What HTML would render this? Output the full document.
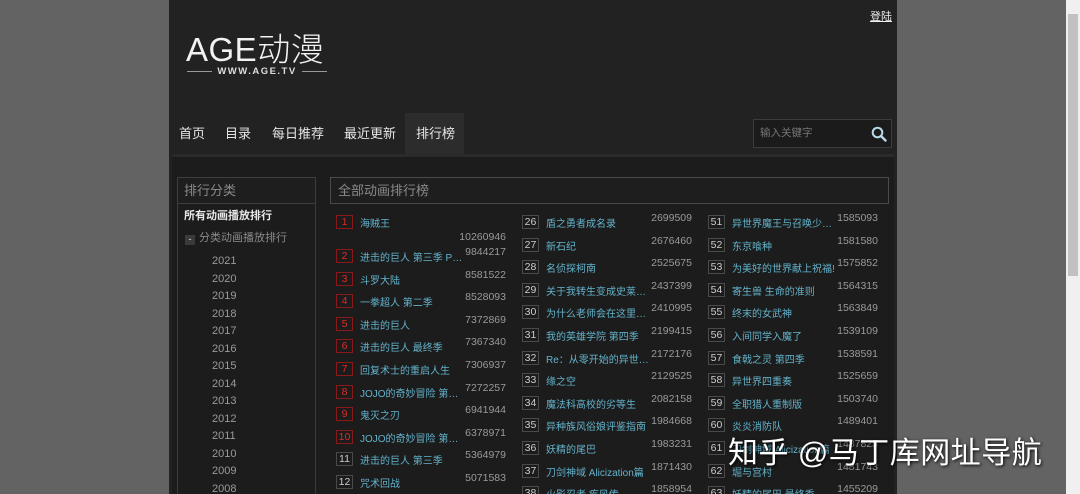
<!DOCTYPE html>
<html><head><meta charset="utf-8"><style>
*{margin:0;padding:0;box-sizing:border-box}
html,body{width:1080px;height:494px;overflow:hidden}
body{background:#636363;font-family:"Liberation Sans","Noto Sans CJK SC",sans-serif;position:relative}
.abs{position:absolute}
#main{left:169px;top:0;width:728px;height:494px;background:#222}
#sb{left:1066px;top:0;width:14px;height:494px;background:#f0f0f0}
#thumb{left:1068px;top:14px;width:10px;height:262px;background:#c1c1c1}
.logo{left:186px;top:23px;color:#f2f2f2;font-size:33px;letter-spacing:0.5px;font-weight:300}
.www{left:187px;top:66px;color:#ddd;font-size:9.5px;letter-spacing:1.5px;font-weight:bold;width:140px;display:flex;align-items:center;gap:5px}
.www i{flex:1;height:1px;background:#999}
.login{left:870px;top:8px;color:#eee;font-size:11px;text-decoration:underline}
.nav{top:113px;height:41px;line-height:41px;color:#e6e6e6;font-size:13px}
.act{left:405px;top:113px;width:59px;height:41px;background:#2c2c2c}
.search{left:753px;top:119px;width:139px;height:29px;border:1px solid #3c3c3c;background:#1b1b1b;color:#777;font-size:10.5px;line-height:27px;padding-left:6px}
#content{left:172px;top:154px;width:722px;height:340px;background:#1c1c1c;border-top:3px solid #2a2a2a}
.lbox{left:177px;top:177px;width:139px;height:317px;border:1px solid #3a3a3a;border-bottom:none}
.lhead{left:177px;top:177px;width:139px;height:27px;border:1px solid #3e3e3e;background:#1e1e1e;color:#8a8a8a;font-size:13px;line-height:25px;padding-left:6px}
.rhead{left:330px;top:177px;width:559px;height:27px;border:1px solid #4a4a4a;background:#1e1e1e;color:#8a8a8a;font-size:13px;line-height:25px;padding-left:7px}
.all{left:184px;top:207px;color:#e8e8e8;font-size:11px;font-weight:bold}
.cat{left:185px;top:229px;color:#8a8a8a;font-size:11px}
.cat b{display:inline-block;width:10px;height:10px;background:#3a3a3a;color:#aaa;font-size:9px;line-height:9px;text-align:center;margin-right:4px;vertical-align:-1px}
.yr{left:212px;color:#9a9a9a;font-size:11px}
.col{width:170px;height:282px;overflow:hidden}
.it{position:relative;height:22.6px;font-size:10px}
.bd{position:absolute;left:0;top:3px;width:17px;height:14px;border:1px solid #4a4a4a;color:#ccc;font-size:10.5px;line-height:12px;text-align:center}
.r .bd{border-color:#8a1a1a;color:#e02a2a}
.t{position:absolute;left:24px;top:3px;color:#63b3cc;white-space:nowrap;width:104px;overflow:hidden;text-overflow:ellipsis}
.n{position:absolute;right:0;top:0px;color:#9a9a9a;font-size:10.5px}
.wm{left:728px;top:428px;color:#fff;font-size:30px;text-shadow:1px 1px 3px #000;letter-spacing:0.5px}
</style></head><body>
<div id="main" class="abs"></div>
<div id="sb" class="abs"></div><div id="thumb" class="abs"></div>
<div class="abs logo">AGE动漫</div>
<div class="abs www"><i></i>WWW.AGE.TV<i></i></div>
<div class="abs login">登陆</div>
<div class="abs act"></div>
<div class="abs nav" style="left:179px">首页</div>
<div class="abs nav" style="left:225px">目录</div>
<div class="abs nav" style="left:272px">每日推荐</div>
<div class="abs nav" style="left:344px">最近更新</div>
<div class="abs nav" style="left:416px">排行榜</div>
<div class="abs search">输入关键字
<svg style="position:absolute;right:4px;top:6px" width="16" height="16" viewBox="0 0 16 16"><circle cx="6.5" cy="6.5" r="4.8" fill="none" stroke="#b8d8e8" stroke-width="2"/><path d="M10 10L14.5 14.5" stroke="#b8d8e8" stroke-width="2.4" stroke-linecap="round"/></svg></div>
<div id="content" class="abs"></div>
<div class="abs lbox"></div>
<div class="abs lhead">排行分类</div>
<div class="abs rhead">全部动画排行榜</div>
<div class="abs all">所有动画播放排行</div>
<div class="abs cat"><b>-</b>分类动画播放排行</div>
<div class="abs yr" style="top:255px">2021</div>
<div class="abs yr" style="top:273px">2020</div>
<div class="abs yr" style="top:290px">2019</div>
<div class="abs yr" style="top:308px">2018</div>
<div class="abs yr" style="top:325px">2017</div>
<div class="abs yr" style="top:343px">2016</div>
<div class="abs yr" style="top:360px">2015</div>
<div class="abs yr" style="top:378px">2014</div>
<div class="abs yr" style="top:395px">2013</div>
<div class="abs yr" style="top:413px">2012</div>
<div class="abs yr" style="top:430px">2011</div>
<div class="abs yr" style="top:448px">2010</div>
<div class="abs yr" style="top:465px">2009</div>
<div class="abs yr" style="top:483px">2008</div>

<div class="abs col" style="left:336px;top:212px">
<div class="it r" style="height:34px"><span class="bd">1</span><span class="t">海贼王</span><span class="n" style="top:19px">10260946</span></div>
<div class="it r"><span class="bd">2</span><span class="t">进击的巨人 第三季 Part.2</span><span class="n">9844217</span></div>
<div class="it r"><span class="bd">3</span><span class="t">斗罗大陆</span><span class="n">8581522</span></div>
<div class="it r"><span class="bd">4</span><span class="t">一拳超人 第二季</span><span class="n">8528093</span></div>
<div class="it r"><span class="bd">5</span><span class="t">进击的巨人</span><span class="n">7372869</span></div>
<div class="it r"><span class="bd">6</span><span class="t">进击的巨人 最终季</span><span class="n">7367340</span></div>
<div class="it r"><span class="bd">7</span><span class="t">回复术士的重启人生</span><span class="n">7306937</span></div>
<div class="it r"><span class="bd">8</span><span class="t">JOJO的奇妙冒险 第三部分</span><span class="n">7272257</span></div>
<div class="it r"><span class="bd">9</span><span class="t">鬼灭之刃</span><span class="n">6941944</span></div>
<div class="it r"><span class="bd">10</span><span class="t">JOJO的奇妙冒险 第一部分</span><span class="n">6378971</span></div>
<div class="it"><span class="bd">11</span><span class="t">进击的巨人 第三季</span><span class="n">5364979</span></div>
<div class="it"><span class="bd">12</span><span class="t">咒术回战</span><span class="n">5071583</span></div>
</div>

<div class="abs col" style="left:522px;top:212px">
<div class="it"><span class="bd">26</span><span class="t">盾之勇者成名录</span><span class="n">2699509</span></div>
<div class="it"><span class="bd">27</span><span class="t">新石纪</span><span class="n">2676460</span></div>
<div class="it"><span class="bd">28</span><span class="t">名侦探柯南</span><span class="n">2525675</span></div>
<div class="it"><span class="bd">29</span><span class="t">关于我转生变成史莱姆这档事</span><span class="n">2437399</span></div>
<div class="it"><span class="bd">30</span><span class="t">为什么老师会在这里！？</span><span class="n">2410995</span></div>
<div class="it"><span class="bd">31</span><span class="t">我的英雄学院 第四季</span><span class="n">2199415</span></div>
<div class="it"><span class="bd">32</span><span class="t">Re：从零开始的异世界生活</span><span class="n">2172176</span></div>
<div class="it"><span class="bd">33</span><span class="t">缘之空</span><span class="n">2129525</span></div>
<div class="it"><span class="bd">34</span><span class="t">魔法科高校的劣等生</span><span class="n">2082158</span></div>
<div class="it"><span class="bd">35</span><span class="t">异种族风俗娘评鉴指南</span><span class="n">1984668</span></div>
<div class="it"><span class="bd">36</span><span class="t">妖精的尾巴</span><span class="n">1983231</span></div>
<div class="it"><span class="bd">37</span><span class="t">刀剑神域 Alicization篇</span><span class="n">1871430</span></div>
<div class="it"><span class="bd">38</span><span class="t">火影忍者 疾风传</span><span class="n">1858954</span></div>
</div>

<div class="abs col" style="left:708px;top:212px">
<div class="it"><span class="bd">51</span><span class="t">异世界魔王与召唤少女的奴隶魔术</span><span class="n">1585093</span></div>
<div class="it"><span class="bd">52</span><span class="t">东京喰种</span><span class="n">1581580</span></div>
<div class="it"><span class="bd">53</span><span class="t">为美好的世界献上祝福!</span><span class="n">1575852</span></div>
<div class="it"><span class="bd">54</span><span class="t">寄生兽 生命的准则</span><span class="n">1564315</span></div>
<div class="it"><span class="bd">55</span><span class="t">终末的女武神</span><span class="n">1563849</span></div>
<div class="it"><span class="bd">56</span><span class="t">入间同学入魔了</span><span class="n">1539109</span></div>
<div class="it"><span class="bd">57</span><span class="t">食戟之灵 第四季</span><span class="n">1538591</span></div>
<div class="it"><span class="bd">58</span><span class="t">异世界四重奏</span><span class="n">1525659</span></div>
<div class="it"><span class="bd">59</span><span class="t">全职猎人重制版</span><span class="n">1503740</span></div>
<div class="it"><span class="bd">60</span><span class="t">炎炎消防队</span><span class="n">1489401</span></div>
<div class="it"><span class="bd">61</span><span class="t">刀剑神域 Alicization篇</span><span class="n">1487825</span></div>
<div class="it"><span class="bd">62</span><span class="t">堀与宫村</span><span class="n">1481743</span></div>
<div class="it"><span class="bd">63</span><span class="t">妖精的尾巴 最终季</span><span class="n">1455209</span></div>
</div>

<div class="abs wm">知乎 @马丁库网址导航</div>
</body></html>
